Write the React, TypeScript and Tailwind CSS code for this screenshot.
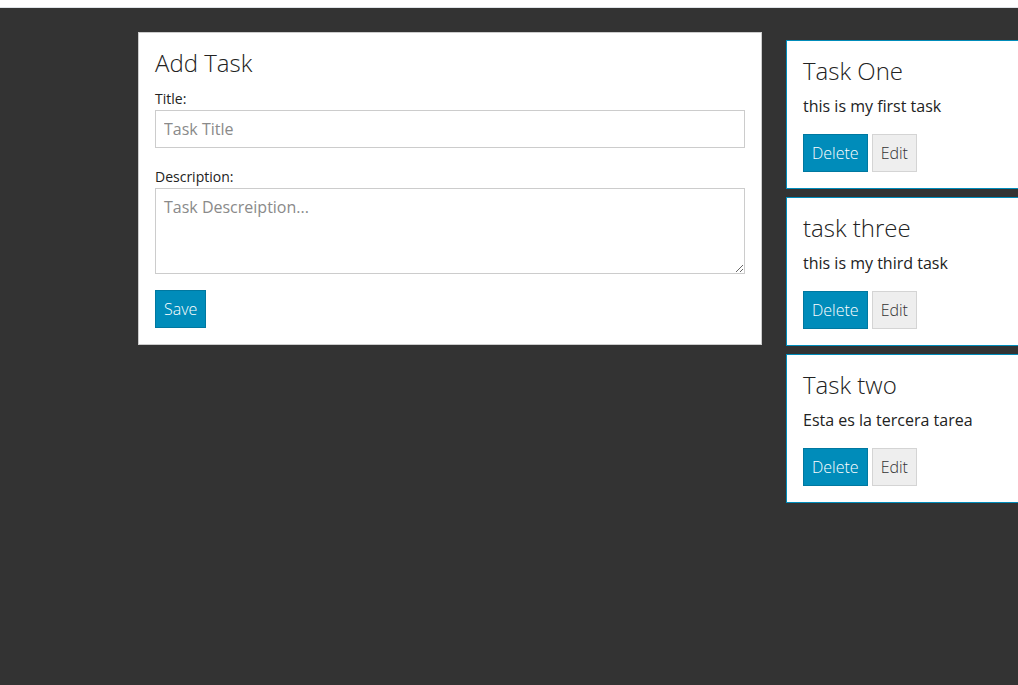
import { useState } from "react";

const tasks = [
  { id: 1, title: "Task One", description: "this is my first task" },
  { id: 2, title: "task three", description: "this is my third task" },
  { id: 3, title: "Task two", description: "Esta es la tercera tarea" },
];

const button = "h-[38px] border px-2 text-base font-light";
const primary = "border-[#0078a0] bg-[#008cba] text-white";
const secondary = "border-[#d4d4d4] bg-[#eee] text-[#333]";
const heading = "mb-[9px] text-2xl leading-7 font-light";
const label = "block text-sm leading-[22px]";
const field =
  "block w-full border border-[#ccc] bg-white px-2 text-base text-black outline-none placeholder:text-[#8a8a8a]";

export default function App() {
  const [title, setTitle] = useState("");
  const [description, setDescription] = useState("");

  return (
    <div className="flex min-h-screen flex-col bg-[#333] font-['Open_Sans',sans-serif] text-[#222]">
      <div className="h-2 border-b border-[#dee2e6] bg-[#fefefe]" />
      <main className="flex items-start gap-6 pt-6 pl-[138px]">
        <form
          className="min-w-0 flex-1 border border-[#ccc] bg-white p-4"
          onSubmit={(e) => e.preventDefault()}
        >
          <h1 className={heading}>Add Task</h1>
          <label htmlFor="title" className={`${label} pt-0.5`}>
            Title:
          </label>
          <input
            id="title"
            className={`${field} h-[38px]`}
            placeholder="Task Title"
            value={title}
            onChange={(e) => setTitle(e.target.value)}
          />
          <label htmlFor="description" className={`${label} mt-4 pt-0.5`}>
            Description:
          </label>
          <textarea
            id="description"
            className={`${field} h-[86px] resize py-1.5 leading-6`}
            placeholder="Task Descreiption..."
            value={description}
            onChange={(e) => setDescription(e.target.value)}
          />
          <button type="submit" className={`${button} ${primary} mt-4 block`}>
            Save
          </button>
        </form>
        <section className="flex w-58 shrink-0 flex-col gap-2 pt-2">
          {tasks.map((task) => (
            <article key={task.id} className="border border-r-0 border-[#008cba] bg-white p-4">
              <h2 className={heading}>{task.title}</h2>
              <p className="text-base leading-6">{task.description}</p>
              <div className="mt-4 flex gap-1">
                <button type="button" className={`${button} ${primary}`}>
                  Delete
                </button>
                <button type="button" className={`${button} ${secondary}`}>
                  Edit
                </button>
              </div>
            </article>
          ))}
        </section>
      </main>
    </div>
  );
}
